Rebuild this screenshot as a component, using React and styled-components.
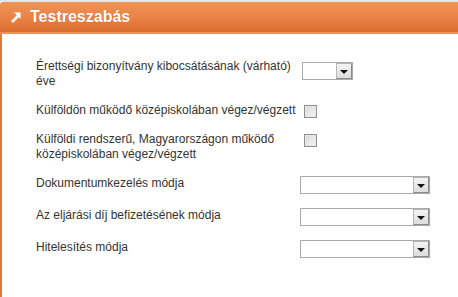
import React from 'react';
import styled, { createGlobalStyle } from 'styled-components';

const Global = createGlobalStyle`
  html, body {
    margin: 0;
    padding: 0;
    background: #fff;
  }
  body {
    font-family: "Liberation Sans", Arial, sans-serif;
  }
`;

const Panel = styled.div`
  width: 458px;
  height: 297px;
  display: flex;
  flex-direction: column;
  border-top: 2px solid #e6e6e6;
  box-sizing: border-box;
`;

const Header = styled.div`
  height: 30px;
  display: flex;
  align-items: center;
  gap: 8px;
  padding-left: 10px;
  background: linear-gradient(to bottom, #f09356 0%, #ea8448 50%, #d96d2f 100%);
  border-top-left-radius: 3px;
  border-bottom: 2px solid #ef915a;
  color: #fff;
  font-size: 16px;
  font-weight: bold;
  text-shadow: 0 0 1px rgba(120, 50, 10, 0.4);
`;

const Body = styled.div`
  flex: 1;
  border-left: 2px solid #e17b3d;
  padding: 25px 0 0 34px;
  display: flex;
  flex-direction: column;
  gap: 14px;
`;

const Row = styled.div`
  display: grid;
  grid-template-columns: ${p => p.$label}px auto;
  align-items: start;
`;

const Label = styled.div`
  font-size: 12px;
  line-height: 15px;
  color: #333;
`;

const Select = styled.div`
  width: ${p => p.$w}px;
  height: 18px;
  box-sizing: border-box;
  border: 1px solid #a9a9a9;
  background: #fff;
  display: flex;
  justify-content: flex-end;
  margin-top: ${p => p.$top || 0}px;
`;

const Arrow = styled.div`
  width: 16px;
  height: 16px;
  box-sizing: border-box;
  border: 1px solid #8a8a8a;
  border-top-color: #b5b5b5;
  border-left-color: #b5b5b5;
  background: linear-gradient(to bottom, #f4f4f4, #dcdcdc);
  display: flex;
  align-items: center;
  justify-content: center;
  padding-top: 2px;

  &::after {
    content: '';
    border-left: 4px solid transparent;
    border-right: 4px solid transparent;
    border-top: 4px solid #111;
  }
`;

const Check = styled.div`
  width: 13px;
  height: 13px;
  box-sizing: border-box;
  border: 1px solid #8f8f8f;
  background: linear-gradient(135deg, #d8d8d8, #f6f6f6);
  box-shadow: inset 0 0 0 1px #e8e8e8;
  margin-top: ${p => p.$top || 0}px;
`;

const ArrowIcon = () => (
  <svg width="12" height="12" viewBox="0 0 12 12">
    <path d="M2 11 L9 4" stroke="#fff" strokeWidth="2.6" />
    <path d="M4 1.5 H10.5 V8 Z" fill="#fff" />
  </svg>
);

const SelectBox = ({ w, top }) => (
  <Select $w={w} $top={top}>
    <Arrow />
  </Select>
);

export default function App() {
  return (
    <>
      <Global />
      <Panel>
        <Header>
          <ArrowIcon />
          <span>Testreszabás</span>
        </Header>
        <Body>
          <Row $label={266}>
            <Label>Érettségi bizonyítvány kibocsátásának (várható)<br />éve</Label>
            <SelectBox w={51} top={3} />
          </Row>
          <Row $label={268}>
            <Label>Külföldön működő középiskolában végez/végzett</Label>
            <Check $top={2} />
          </Row>
          <Row $label={268}>
            <Label>Külföldi rendszerű, Magyarországon működő<br />középiskolában végez/végzett</Label>
            <Check $top={2} />
          </Row>
          <Row $label={264}>
            <Label>Dokumentumkezelés módja</Label>
            <SelectBox w={130} />
          </Row>
          <Row $label={264}>
            <Label>Az eljárási díj befizetésének módja</Label>
            <SelectBox w={130} />
          </Row>
          <Row $label={264}>
            <Label>Hitelesítés módja</Label>
            <SelectBox w={130} />
          </Row>
        </Body>
      </Panel>
    </>
  );
}
